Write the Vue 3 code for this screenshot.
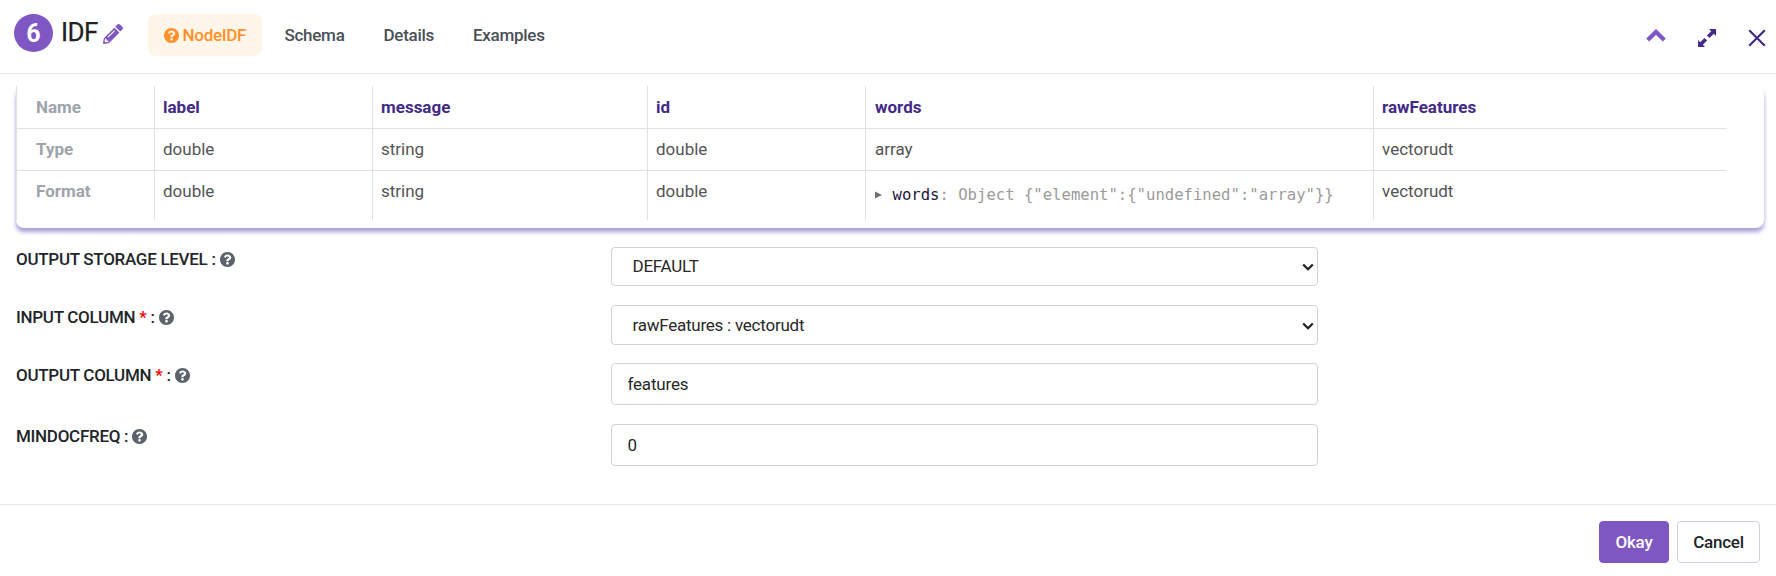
<script setup>
import { ref } from 'vue'

const tabs = ['Schema', 'Details', 'Examples']
const columns = [
  { name: 'label', type: 'double', format: 'double' },
  { name: 'message', type: 'string', format: 'string' },
  { name: 'id', type: 'double', format: 'double' },
  { name: 'words', type: 'array', object: '{"element":{"undefined":"array"}}' },
  { name: 'rawFeatures', type: 'vectorudt', format: 'vectorudt' },
]
const fields = ref([
  { key: 'storage', label: 'OUTPUT STORAGE LEVEL', kind: 'select', value: 'DEFAULT' },
  { key: 'input', label: 'INPUT COLUMN', required: true, kind: 'select', value: 'rawFeatures : vectorudt' },
  { key: 'output', label: 'OUTPUT COLUMN', required: true, kind: 'text', value: 'features' },
  { key: 'freq', label: 'MINDOCFREQ', kind: 'text', value: '0' },
])
const questionPath =
  'M504 256c0 137-111 248-248 248S8 393 8 256 119 8 256 8s248 111 248 248zM262.700 90c-54.500 0-89.300 23-116.500 63.800-3.500 5.300-2.400 12.400 2.700 16.300l34.700 26.300c5.200 3.900 12.600 3 16.700-2.100 17.900-22.700 30.100-35.800 57.300-35.800 20.400 0 45.700 13.100 45.700 33 0 15-12.400 22.700-32.500 34C247.100 238.500 216 254.900 216 296v4c0 6.600 5.400 12 12 12h56c6.600 0 12-5.400 12-12v-1.300c0-28.500 83.200-29.600 83.200-106.700 0-58-60.200-102-116.500-102zM256 338c-25.400 0-46 20.600-46 46s20.600 46 46 46 46-20.600 46-46-20.600-46-46-46z'
</script>

<template>
  <div class="dialog">
    <header class="head">
      <span class="number">6</span>
      <h1>IDF</h1>
      <svg class="pencil" viewBox="0 0 512 512"><path d="M497.900 142.100l-46.100 46.100c-4.700 4.700-12.300 4.700-17 0l-111-111c-4.700-4.700-4.700-12.300 0-17l46.100-46.100c18.700-18.700 49.100-18.700 67.900 0l60.100 60.100c18.800 18.700 18.800 49.100 0 67.900zM284.200 99.800L21.600 362.400.4 483.900c-2.900 16.400 11.400 30.600 27.800 27.800l121.500-21.300 262.600-262.600c4.700-4.700 4.700-12.300 0-17l-111-111c-4.800-4.700-12.400-4.700-17.100 0zM124.100 339.900c-5.500-5.500-5.500-14.300 0-19.800l154-154c5.500-5.500 14.300-5.500 19.800 0s5.500 14.300 0 19.800l-154 154c-5.500 5.500-14.300 5.500-19.800 0zM88 424h48v36.300l-64.500 11.300-31.100-31.100L51.700 376H88v48z" /></svg>
      <nav>
        <a class="tab active"><svg viewBox="8 8 496 496"><path :d="questionPath" /></svg>NodeIDF</a>
        <a v-for="t in tabs" :key="t" class="tab">{{ t }}</a>
      </nav>
      <div class="tools">
        <svg class="up" viewBox="0 0 20 13"><path d="M1.700 11 10 2.900l8.300 8.100" /></svg>
        <svg class="expand" viewBox="0 0 18 18"><path d="M11 0h7v7l-2.200-2.200-4.300 4.300-2.600-2.600 4.300-4.300zM7 18H0v-7l2.200 2.200 4.300-4.300 2.600 2.600-4.300 4.300z" /><path class="gap" d="m6.500 6.500 5 5" /></svg>
        <svg class="close" viewBox="0 0 18 18"><path d="m1.200 1.200 15.600 15.600M16.800 1.200 1.200 16.800" /></svg>
      </div>
    </header>

    <main>
      <section class="card">
        <div class="schema">
          <div class="cell side first">Name</div>
          <div v-for="c in columns" :key="c.name" class="cell name first">{{ c.name }}</div>
          <div class="cell side">Type</div>
          <div v-for="c in columns" :key="c.name" class="cell">{{ c.type }}</div>
          <div class="cell side last">Format</div>
          <div v-for="c in columns" :key="c.name" class="cell last">
            <div v-if="c.object" class="tree">
              <svg viewBox="0 0 7 8"><path d="M0 0.500 7 4 0 7.500z" /></svg><b>{{ c.name }}</b>: Object {{ c.object }}
            </div>
            <template v-else>{{ c.format }}</template>
          </div>
        </div>
      </section>

      <form>
        <div v-for="f in fields" :key="f.key" class="row" :class="f.key">
          <label>{{ f.label }} <i v-if="f.required">* </i>:
            <svg viewBox="8 8 496 496"><path :d="questionPath" /></svg></label>
          <div v-if="f.kind === 'select'" class="choice">
            <select v-model="f.value"><option>{{ f.value }}</option></select>
            <svg viewBox="0 0 12 8"><path d="m1.200 1.500 4.800 4.700 4.800-4.700" /></svg>
          </div>
          <input v-else v-model="f.value" type="text" />
        </div>
      </form>
    </main>

    <footer>
      <button class="primary">Okay</button>
      <button>Cancel</button>
    </footer>
  </div>
</template>

<style>
body { margin: 0; background: #fff; overflow: hidden; }
</style>

<style scoped>
* { box-sizing: border-box; }
.dialog { display: flex; flex-direction: column; width: 1776px; height: 576px; font: 400 17px/25px Roboto, sans-serif; color: #212529; }
.head { display: flex; align-items: flex-start; height: 74px; padding: 14px 10px 0 14px; border-bottom: 1px solid #e9ebee; }
.number { width: 39px; height: 38px; border-radius: 50%; background: #7e57c2; color: #fff; font: 700 25px/39px Roboto, sans-serif; text-align: center; }
h1 { margin: 0 0 0 8px; width: 41px; font: 400 26px/37px Roboto, sans-serif; letter-spacing: -0.600px; color: #212121; white-space: nowrap; -webkit-text-stroke: 0.250px #212121; }
.pencil { width: 20px; height: 20px; margin: 10px 0 0 1px; fill: #7e57c2; }
nav { display: flex; margin-left: 25px; font-weight: 500; letter-spacing: -0.280px; color: #495057; }
.tab { display: flex; align-items: center; height: 42px; padding: 0 15.500px; margin-right: 8px; }
.active { width: 114px; margin-right: 7px; color: #ff9128; background: #fff5e8; border-radius: 8px; }
.active svg { width: 15px; height: 15px; margin-right: 4px; fill: currentColor; }
.tools { display: flex; margin-left: auto; color: #432a87; }
.up { width: 20px; height: 13px; margin-top: 15px; fill: none; stroke: #7e57c2; stroke-width: 4.200; }
.expand { width: 18px; height: 18px; margin: 15px 0 0 32px; fill: currentColor; }
.gap { stroke: #fff; stroke-width: 1.500; }
.close { width: 18px; height: 18px; margin: 15px 0 0 32px; fill: none; stroke: currentColor; stroke-width: 2.200; }

main { flex: 1; padding: 12px 12px 0 16px; }
.card { height: 142px; border-radius: 8px; box-shadow: 0 4px 4px #a89fd9; clip-path: inset(0 -10px -12px -10px); }
.schema { display: grid; grid-template-columns: 138px 218px 275px 218px 508px 353px; grid-template-rows: 43px 42px 49px; width: 1711px; border-left: 1px solid #dee2e6; }
.cell { padding: 8px; border-bottom: 1px solid #dee2e6; border-right: 1px solid #dee2e6; color: #545454; white-space: nowrap; }
.cell:nth-child(6n) { border-right: 0; }
.cell:nth-child(6n + 5) { padding-left: 9px; }
.cell.first { padding-top: 9px; }
.cell.last { border-bottom: 0; }
.cell.side { padding-left: 19px; font-weight: 700; color: #9ea4aa; }
.cell.name { font-weight: 700; color: #432a87; }
.tree { display: flex; align-items: center; padding-top: 4px; font: 15.600px/24px "DejaVu Sans Mono", monospace; color: #9b9b9b; white-space: pre; }
.tree svg { width: 7px; height: 8px; margin-right: 10.500px; fill: #6e6e6e; }
.tree b { font-weight: 400; color: #20123c; }

form { padding-top: 19px; }
.row { display: grid; grid-template-columns: 595px 707px; align-items: start; }
.row + .row { margin-top: 19px; }
.input + .output { margin-top: 18px; }
label { color: #212529; font-weight: 500; letter-spacing: -0.290px; white-space: nowrap; }
label i { color: #f00; font-style: normal; }
label svg { width: 15px; height: 15px; vertical-align: -2px; fill: #5b626b; }
select, input { display: block; width: 100%; height: 42px; border: 1px solid #ced4da; border-radius: 4px; background: #fff; color: #282828; font: 400 17px/25px Roboto, sans-serif; letter-spacing: -0.180px; padding: 0 15.500px; margin: 0; outline: 0; }
.choice { position: relative; }
.choice svg { position: absolute; right: 4px; top: 16px; width: 12px; height: 8px; fill: none; stroke: #202020; stroke-width: 2.300; }
select { appearance: none; height: 39px; padding: 0 0 1px 20.500px; letter-spacing: -0.240px; }
.input select { height: 40px; padding-bottom: 0; }
.input .choice svg { top: 17px; }

footer { display: flex; justify-content: flex-end; gap: 8px; height: 72px; padding: 16px 16px 0; border-top: 1px solid #e5e7ea; }
button { width: 83px; height: 42px; padding: 0; border: 1px solid #ced0de; border-radius: 4px; background: #fff; color: #212529; font: 500 17px Roboto, sans-serif; letter-spacing: -0.250px; }
.primary { width: 70px; border-color: #7e57c2; background: #7e57c2; color: #fff; }
</style>
